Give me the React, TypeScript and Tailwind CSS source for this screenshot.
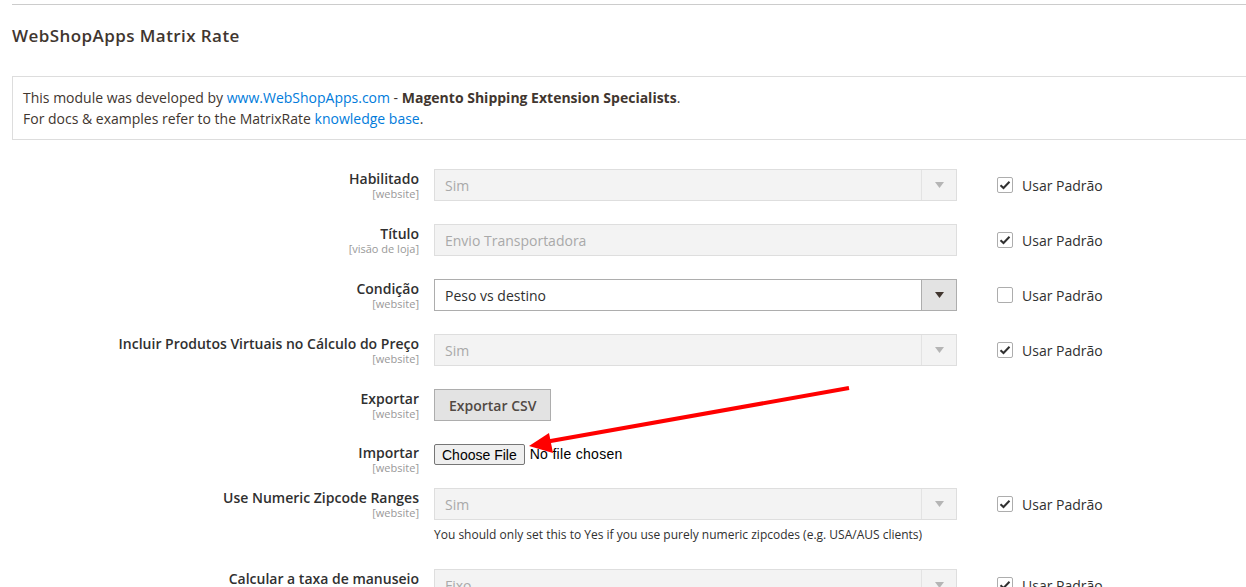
import React from 'react';

type Row = {
  label: string;
  scope: string;
  kind: 'select' | 'input' | 'button' | 'file';
  value?: string;
  disabled?: boolean;
  checked?: boolean;
  hint?: string;
};

const rows: Row[] = [
  { label: 'Habilitado', scope: '[website]', kind: 'select', value: 'Sim', disabled: true, checked: true },
  { label: 'Título', scope: '[visão de loja]', kind: 'input', value: 'Envio Transportadora', disabled: true, checked: true },
  { label: 'Condição', scope: '[website]', kind: 'select', value: 'Peso vs destino', disabled: false, checked: false },
  { label: 'Incluir Produtos Virtuais no Cálculo do Preço', scope: '[website]', kind: 'select', value: 'Sim', disabled: true, checked: true },
  { label: 'Exportar', scope: '[website]', kind: 'button', value: 'Exportar CSV' },
  { label: 'Importar', scope: '[website]', kind: 'file' },
  {
    label: 'Use Numeric Zipcode Ranges',
    scope: '[website]',
    kind: 'select',
    value: 'Sim',
    disabled: true,
    checked: true,
    hint: 'You should only set this to Yes if you use purely numeric zipcodes (e.g. USA/AUS clients)',
  },
  { label: 'Calcular a taxa de manuseio', scope: '', kind: 'select', value: 'Fixo', disabled: true, checked: true },
];

const Caret: React.FC<{ dark?: boolean }> = ({ dark }) => (
  <svg width="9" height="6" viewBox="0 0 9 6">
    <polygon points="0,0 9,0 4.5,6" fill={dark ? '#41362f' : '#b5b5b5'} />
  </svg>
);

const Checkbox: React.FC<{ checked?: boolean }> = ({ checked }) => (
  <div className="flex items-center gap-[9px]">
    <div className="w-[16px] h-[16px] border border-[#adadad] rounded-[2px] bg-white flex items-center justify-center">
      {checked && (
        <svg width="12" height="10" viewBox="0 0 12 10">
          <path d="M1.5 5.2 L4.5 8 L10.5 1.8" fill="none" stroke="#303030" strokeWidth="2" />
        </svg>
      )}
    </div>
    <span className="text-[14px] text-[#303030]">Usar Padrão</span>
  </div>
);

const Control: React.FC<{ row: Row }> = ({ row }) => {
  if (row.kind === 'button') {
    return (
      <button className="h-[32px] px-[14px] bg-[#e3e3e3] border border-[#adadad] text-[14px] font-semibold text-[#514943]">
        {row.value}
      </button>
    );
  }
  if (row.kind === 'file') {
    return (
      <div className="flex items-center h-[21px] font-['Liberation_Sans',Arial,sans-serif] text-[14px] text-black">
        <button className="h-[21px] px-[7px] bg-[#efefef] border border-[#767676] rounded-[2px] leading-none">
          Choose File
        </button>
        <span className="ml-[5px] tracking-[0.3px]">No file chosen</span>
      </div>
    );
  }
  const dis = row.disabled;
  return (
    <div
      className={`w-[523px] h-[32px] flex border ${
        dis ? 'bg-[#f3f3f3] border-[#dedede] text-[#a9a9a9]' : 'bg-white border-[#adadad] text-[#303030]'
      }`}
    >
      <div className="flex-1 flex items-center pl-[10px] text-[14px]">{row.value}</div>
      {row.kind === 'select' && (
        <div
          className={`w-[35px] flex items-center justify-center border-l ${
            dis ? 'border-[#e3e3e3]' : 'bg-[#e3e3e3] border-[#adadad]'
          }`}
        >
          <Caret dark={!dis} />
        </div>
      )}
    </div>
  );
};

export default function App() {
  return (
    <div className="relative w-[1246px] h-[587px] overflow-hidden bg-white font-['Open_Sans',sans-serif] text-[#41362f]">
      <div className="pl-[12px] pt-[4px] w-[1260px]">
        <div className="border-t border-[#cccccc]" />
        <h2 className="text-[17px] font-semibold leading-[20px] mt-[21px] tracking-[0.025em]">WebShopApps Matrix Rate</h2>
        <div className="mt-[30px] border border-[#dddddd] px-[10px] py-[10px] text-[14px] leading-[21px]">
          <p>
            This module was developed by <a className="text-[#007bdb]">www.WebShopApps.com</a> -{' '}
            <strong className="font-bold">Magento Shipping Extension Specialists</strong>.
          </p>
          <p>
            For docs &amp; examples refer to the MatrixRate <a className="text-[#007bdb]">knowledge base</a>.
          </p>
        </div>

        <div className="mt-[29px] flex flex-col">
          {rows.map((row) => (
            <div key={row.label} className="flex flex-col mb-[23px]">
              <div className={`flex ${row.kind === 'file' ? 'h-[21px] items-center' : 'h-[32px] items-center'}`}>
                <div className="w-[407px] self-start text-right">
                  <div
                    className={`text-[14px] font-semibold leading-[17px] text-[#303030] ${
                      row.kind === 'file' ? 'mt-0' : 'mt-[1px]'
                    }`}
                  >
                    {row.label}
                  </div>
                  {row.scope && <div className="text-[11px] leading-[13px] text-[#999999]">{row.scope}</div>}
                </div>
                <div className="ml-[15px] w-[523px] flex items-center">
                  <Control row={row} />
                </div>
                {row.checked !== undefined && (
                  <div className="ml-[40px]">
                    <Checkbox checked={row.checked} />
                  </div>
                )}
              </div>
              {row.hint && (
                <div className="ml-[422px] mt-[8px] mb-[4px] text-[12px] leading-[14px] text-[#303030]">{row.hint}</div>
              )}
            </div>
          ))}
        </div>
      </div>

      <svg className="absolute left-0 top-0 pointer-events-none" width="1246" height="587">
        <line x1="849" y1="388" x2="545" y2="442" stroke="#ff0000" strokeWidth="4" />
        <polygon points="529,446 549,433 553,453" fill="#ff0000" />
      </svg>
    </div>
  );
}
